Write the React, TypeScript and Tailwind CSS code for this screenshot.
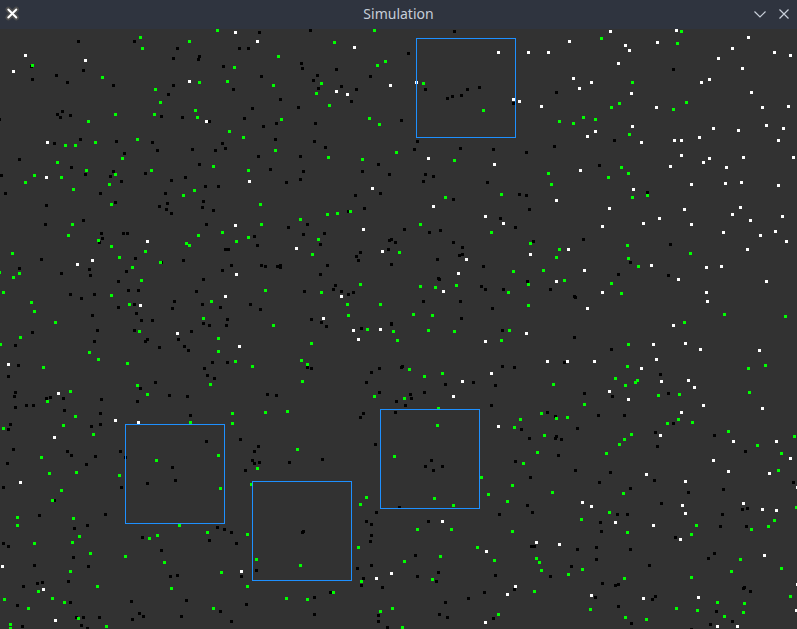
type Kind = 'black' | 'white' | 'green';

interface Sector {
  origin: [number, number];
  black: string;
  white: string;
  green: string;
}

// Particle centres, stored per sector as "x,y" pairs relative to the sector's origin.
const sectors: Sector[] = [
  {
    origin: [0, -29],
    black:
      '78,41 134,41 177,48 173,58 199,56 198,59 31,66 32,79 56,75 83,70 67,82 113,85 173,85 168,94 62,111 57,114 60,117 70,115 -1,119 161,116 182,117 54,143 80,139 116,141 152,142 157,150 192,149 124,153 19,159 199,164 71,167 85,174 113,171 110,176 121,181 145,173 171,180 185,177 1,175 5,193 100,193 165,193 46,205 115,202 159,206 167,203 166,209',
    white: '25,55 85,60 13,71 189,81 47,142 46,177',
    green:
      '140,37 142,48 189,41 32,65 102,77 155,89 160,102 154,114 115,114 195,110 197,117 199,82 88,121 65,145 75,145 95,142 137,139 122,158 57,162 86,170 115,174 151,170 34,175 25,182 61,177 73,189 109,184 111,204 183,195 194,190',
  },
  {
    origin: [200, -29],
    black:
      '59,32 110,30 39,48 48,48 23,66 33,89 61,76 101,63 102,68 117,75 113,80 118,88 136,69 141,86 156,89 151,101 170,76 80,99 52,108 98,107 44,118 9,121 63,126 76,123 115,123 75,139 114,141 125,147 22,143 25,148 15,150 58,156 100,156 70,169 103,171 100,179 86,182 5,186 18,186 178,164 162,171 189,174 180,193 155,195 3,201 2,207 164,208 13,210',
    white: '35,32 57,41 154,47 190,85 136,91 147,94 6,121 49,181 172,188',
    green:
      '17,30 174,30 134,42 78,56 34,67 27,81 73,85 121,83 116,93 129,105 177,65 185,61 81,119 169,118 179,124 29,131 43,137 75,150 128,157 162,159 196,152 13,166 48,170 60,204',
  },
  {
    origin: [400, -29],
    black:
      '54,31 8,53 25,89 47,98 52,96 61,95 67,89 79,87 113,103 156,92 1,120 17,141 14,149 60,148 93,149 126,152 154,146 25,174 33,176 23,181 53,199 87,182 119,194 126,195 129,209 199,165',
    white:
      '98,52 128,52 148,52 169,41 16,82 173,78 191,82 179,88 113,99 119,101 141,106 195,131 187,136 28,158 94,164 180,170 156,200 33,206',
    green: '23,83 83,110 54,160 45,197 101,194 159,121 173,123 183,117 195,119 148,173 151,184',
  },
  {
    origin: [597, -29],
    black: '76,69 17,140 50,192',
    white:
      '13,31 79,30 28,45 32,50 60,42 21,63 151,37 135,48 121,58 177,52 193,55 145,68 112,79 104,82 34,93 154,92 59,107 165,107 191,106 35,126 116,128 141,130 169,125 186,128 44,142 77,140 84,140 102,137 181,140 84,155 112,158 106,162 146,157 196,157 73,166 129,167 36,189 94,184 128,183 144,182 181,185 143,207 12,208 87,209',
    green: '84,31 4,38 80,43 35,82 22,103 14,107 89,102 76,109 32,134 24,167 31,173 11,177 35,197 50,195',
  },
  {
    origin: [0, 181],
    black:
      '171,3 45,14 83,10 101,23 102,28 99,32 123,23 127,23 41,49 19,58 61,63 89,59 90,65 135,48 126,61 161,52 183,50 118,71 128,80 138,80 196,81 70,84 81,88 94,84 92,105 118,97 134,94 136,103 141,110 152,110 174,91 172,98 32,122 15,135 97,120 94,131 134,120 147,129 145,131 159,137 178,129 191,121 184,136 188,140 18,155 8,166 155,172 140,178 169,185 187,186 137,191 101,189 100,203 190,205 15,182 14,186 15,197 26,195 33,195 46,188 50,187 63,188 64,200',
    white: '147,31 77,54 92,50 140,95 177,123 8,154 58,183 115,210',
    green:
      '72,14 68,25 12,43 -1,62 19,63 13,67 3,82 31,92 34,101 55,112 20,127 0,134 43,157 98,30 111,36 119,47 132,57 145,41 160,52 141,70 111,85 129,94 139,121 186,33 189,35 198,25 89,142 98,149 127,153 137,175 147,184 70,181 47,191 75,206',
  },
  {
    origin: [200, 181],
    black:
      '148,1 6,14 88,17 107,14 103,24 124,23 120,34 54,26 57,35 25,39 28,39 31,55 22,60 3,69 61,55 65,56 77,56 80,55 80,57 127,55 120,64 104,81 160,42 156,46 158,50 189,30 191,29 195,32 188,39 191,54 135,75 133,79 141,81 148,84 153,82 2,94 20,97 50,94 60,99 27,109 26,115 3,113 9,115 111,109 121,112 126,116 161,118 191,113 191,114 12,152 27,152 4,158 7,165 14,168 67,184 76,185 107,157 111,158 179,158 171,162 166,172 179,182 196,191 195,202 163,203 160,207',
    white: '35,15 96,38 36,64 25,86 39,136 163,19 182,41 141,86 123,108 153,120 158,129 180,119',
    green:
      '150,1 127,4 137,3 100,9 61,14 22,22 48,27 36,31 118,29 112,44 199,42 65,80 11,91 3,108 73,115 121,82 160,74 147,94 148,105 180,94 167,119 193,121 197,130 111,133 18,128 18,141 35,151 52,156 10,174 101,150 107,154 102,171 174,186 32,203 65,202 87,201',
  },
  {
    origin: [400, 181],
    black:
      '100,8 115,17 4,19 29,22 40,20 53,32 62,37 62,44 59,45 37,49 83,56 38,68 39,69 81,76 85,79 103,79 127,71 133,31 183,29 150,79 174,86 175,87 23,91 60,91 61,108 92,98 102,120 174,127 2,156 1,157 102,156 114,157 164,152 73,172 95,175 45,174 24,182 10,184 11,188 5,195 91,195 184,183 147,202 155,206 198,205',
    white:
      '85,6 103,13 66,49 58,63 43,81 130,44 168,39 184,60 156,71 187,98 126,123 85,131 147,151 167,151 194,151 91,163 62,171 53,186',
    green:
      '20,14 91,22 130,33 159,39 156,47 113,61 143,60 164,70 128,74 108,82 56,75 35,77 20,76 128,95 13,104 32,105 28,120 54,121 109,120 101,130 9,159 24,166 42,163 4,188 38,198 153,174 184,194 141,203 167,207 120,209 156,208',
  },
  {
    origin: [597, 181],
    black: '73,34 33,52 21,64 71,65 14,139 63,164 71,183 15,186 27,205',
    white:
      '5,16 46,13 62,8 94,14 135,4 153,10 185,6 126,22 163,25 178,21 189,31 150,39 54,55 109,57 124,56 81,69 169,71 5,82 109,82 110,91 76,115 56,134 88,133 103,139 162,140 59,149 44,158 64,171 91,170 97,177 12,181 31,189 106,195 84,202 165,198',
    green:
      '30,35 31,48 41,56 93,43 14,73 24,83 127,104 188,106 87,112 31,134 30,156 18,168 28,175 38,172 40,170 61,185 82,184 151,158 168,155 152,182 81,209',
  },
  {
    origin: [0, 390],
    black:
      '10,5 8,10 91,7 100,5 13,30 7,44 67,32 71,36 95,37 86,45 120,32 125,38 3,68 121,68 54,81 39,96 105,95 87,106 74,109 172,48 175,61 147,64 3,124 8,127 142,118 161,131 73,138 88,147 34,146 68,162 37,164 42,163 23,167 17,186 70,183 170,157 177,156 131,182 186,181 139,194 143,197 132,200 181,197 76,198 83,198 99,198 81,206 87,209 22,207',
    white: '54,18 138,3 20,63 2,147 43,170 55,201',
    green:
      '63,6 3,9 93,15 41,38 49,54 76,53 119,56 61,71 52,81 156,41 190,3 17,98 17,106 73,99 79,117 72,123 34,124 90,134 125,137 149,119 157,116 179,106 164,143 70,152 97,167 171,169 38,172 52,179 64,183 4,180 28,189 10,205 10,209 78,199 106,207',
  },
  {
    origin: [200, 390],
    black:
      '6,22 40,20 58,27 54,32 52,41 54,44 59,43 89,43 45,51 122,40 175,25 102,113 103,112 17,108 24,110 31,113 9,121 36,124 176,93 166,102 171,105 171,116 170,122 199,88 56,151 41,157 171,146 157,149 163,159 161,166 182,168 130,173 114,178 46,185 20,192 31,202 114,195 178,196 178,202 187,208',
    white: '41,152 176,159 191,154',
    green:
      '32,4 18,36 20,69 97,30 57,49 51,65 47,115 7,113 56,140 100,146 158,128 166,78 160,85 194,37 21,153 47,167 161,162 133,173 86,179 107,180 13,189 180,192 192,189',
  },
  {
    origin: [400, 390],
    black:
      '121,10 129,19 156,17 155,19 161,20 177,9 158,36 115,42 175,51 130,58 31,41 25,47 42,47 33,51 199,63 127,86 132,93 99,95 28,102 131,127 134,127 177,130 196,128 196,140 171,147 15,136 38,153 17,157 36,162 95,156 150,157 84,173 114,170 68,179 45,183 39,195 47,198 93,199 195,178',
    white: '98,7 182,83 191,87 42,102 136,123 159,125 86,132 115,167 107,175 191,176 85,203',
    green:
      '37,6 114,8 144,16 137,33 123,44 81,58 112,66 88,75 107,82 152,73 34,79 53,86 181,100 17,110 51,110 112,112 77,128 40,137 4,142 94,141 136,139 139,143 141,151 168,155 182,150 32,160 134,172 190,190 98,195 2,208',
  },
  {
    origin: [597, 390],
    black:
      '76,4 58,13 60,27 117,16 148,32 13,53 57,61 33,69 126,70 91,73 196,63 64,84 20,95 30,95 3,103 4,112 145,90 150,89 125,95 123,107 149,107 78,118 33,130 117,134 111,139 52,146 5,164 18,166 21,165 147,168 146,169 153,172 58,177 55,180 21,187 119,192 135,202 113,205 34,204 94,210',
    white:
      '63,16 136,22 179,22 193,39 116,41 131,52 172,54 49,55 88,62 200,68 85,86 88,94 146,84 165,90 179,91 18,103 56,106 83,120 167,136 200,165 199,191 46,179 101,178 120,207 140,207',
    green:
      '70,4 95,3 34,15 27,20 22,25 9,34 131,12 160,26 197,17 184,34 181,51 26,74 12,93 30,113 99,106 94,115 177,101 171,107 154,110 199,88 143,140 134,152 184,149 94,158 27,159 193,177 120,183 147,184 146,193 127,197 100,191 79,189 28,198 49,200',
  },
];

const zones: [number, number][] = [
  [416, 9],
  [125, 395],
  [252, 452],
  [380, 380],
];

const fills: Record<Kind, string> = {
  black: 'fill-black',
  white: 'fill-white',
  green: 'fill-[#00ff00]',
};

const layers: Kind[] = ['black', 'white', 'green'];

// One path of 3x3 squares for all particles of a kind.
function particlePath(kind: Kind): string {
  return sectors
    .flatMap(({ origin, [kind]: points }) =>
      points.split(' ').map((point) => {
        const [x, y] = point.split(',').map(Number);
        return `M${origin[0] + x - 1} ${origin[1] + y - 1}h3v3h-3z`;
      }),
    )
    .join('');
}

function TitleBar() {
  return (
    <header className="grid h-[29px] shrink-0 grid-cols-[1fr_auto_1fr] items-center bg-[#2f343f] px-[5px] pb-px">
      <button type="button" aria-label="Window menu" className="flex size-4 items-center justify-center">
        <svg viewBox="0 0 16 16" className="size-4" fill="none" strokeLinecap="round">
          <path d="M3.300 3.500l8 8M11.300 3.500l-8 8" stroke="#4d4d4d" strokeWidth="5.500" />
          <path d="M3.300 3.500l8 8M11.300 3.500l-8 8" stroke="#ffffff" strokeWidth="2" />
        </svg>
      </button>
      <h1 className="font-['Noto_Sans',sans-serif] text-sm leading-5 text-[#c6cdd8]">Simulation</h1>
      <div className="flex justify-end gap-2">
        <button type="button" aria-label="Minimize" className="flex size-4 items-center justify-center">
          <svg viewBox="0 0 16 16" className="size-4" fill="none" stroke="#c9d0da">
            <path d="M2.500 5.500l5.500 5.500l5.500-5.500" strokeWidth="1.200" />
          </svg>
        </button>
        <button type="button" aria-label="Close" className="flex size-4 items-center justify-center">
          <svg viewBox="0 0 16 16" className="size-4" fill="none" stroke="#c9d0da">
            <path d="M3.500 3.500l9 9M12.500 3.500l-9 9" strokeWidth="1.200" />
          </svg>
        </button>
      </div>
    </header>
  );
}

export default function App() {
  return (
    <div className="flex min-h-screen flex-col bg-[#323232]">
      <TitleBar />
      <main className="flex grow overflow-hidden">
        <svg role="img" aria-label="Particle field" className="min-h-[600px] w-full grow" shapeRendering="crispEdges">
          {layers.map((kind) => (
            <path key={kind} className={fills[kind]} d={particlePath(kind)} />
          ))}
          {zones.map(([x, y]) => (
            <rect
              key={`${x}-${y}`}
              x={x + 0.5}
              y={y + 0.5}
              width="99"
              height="99"
              className="fill-none stroke-[#1e90ff]"
            />
          ))}
        </svg>
      </main>
    </div>
  );
}
